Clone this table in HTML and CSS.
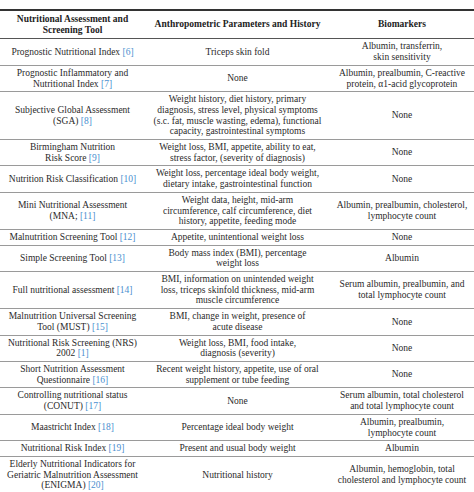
FILE: index.html
```html
<!DOCTYPE html>
<html>
<head>
<meta charset="utf-8">
<link rel="stylesheet" href="styles.css">
</head>
<body>
<div class="page">
<div class="top-space"></div>
<table class="tbl">
<colgroup><col class="c1"><col class="c2"><col class="c3"></colgroup>
<thead>
<tr><th>Nutritional Assessment and<br>Screening Tool</th><th>Anthropometric Parameters and History</th><th>Biomarkers</th></tr>
</thead>
<tbody>
<tr><td>Prognostic Nutritional Index <span class="ref">[6]</span></td><td>Triceps skin fold</td><td>Albumin, transferrin,<br>skin sensitivity</td></tr>
<tr><td>Prognostic Inflammatory and<br>Nutritional Index <span class="ref">[7]</span></td><td>None</td><td>Albumin, prealbumin, C-reactive<br>protein, α1-acid glycoprotein</td></tr>
<tr><td>Subjective Global Assessment<br>(SGA) <span class="ref">[8]</span></td><td>Weight history, diet history, primary<br>diagnosis, stress level, physical symptoms<br>(s.c. fat, muscle wasting, edema), functional<br>capacity, gastrointestinal symptoms</td><td>None</td></tr>
<tr><td>Birmingham Nutrition<br>Risk Score <span class="ref">[9]</span></td><td>Weight loss, BMI, appetite, ability to eat,<br>stress factor, (severity of diagnosis)</td><td>None</td></tr>
<tr><td>Nutrition Risk Classification <span class="ref">[10]</span></td><td>Weight loss, percentage ideal body weight,<br>dietary intake, gastrointestinal function</td><td>None</td></tr>
<tr><td>Mini Nutritional Assessment<br>(MNA; <span class="ref">[11]</span></td><td>Weight data, height, mid-arm<br>circumference, calf circumference, diet<br>history, appetite, feeding mode</td><td>Albumin, prealbumin, cholesterol,<br>lymphocyte count</td></tr>
<tr><td>Malnutrition Screening Tool <span class="ref">[12]</span></td><td>Appetite, unintentional weight loss</td><td>None</td></tr>
<tr><td>Simple Screening Tool <span class="ref">[13]</span></td><td>Body mass index (BMI), percentage<br>weight loss</td><td>Albumin</td></tr>
<tr><td>Full nutritional assessment <span class="ref">[14]</span></td><td>BMI, information on unintended weight<br>loss, triceps skinfold thickness, mid-arm<br>muscle circumference</td><td>Serum albumin, prealbumin, and<br>total lymphocyte count</td></tr>
<tr><td>Malnutrition Universal Screening<br>Tool (MUST) <span class="ref">[15]</span></td><td>BMI, change in weight, presence of<br>acute disease</td><td>None</td></tr>
<tr><td>Nutritional Risk Screening (NRS)<br>2002 <span class="ref">[1]</span></td><td>Weight loss, BMI, food intake,<br>diagnosis (severity)</td><td>None</td></tr>
<tr><td>Short Nutrition Assessment<br>Questionnaire <span class="ref">[16]</span></td><td>Recent weight history, appetite, use of oral<br>supplement or tube feeding</td><td>None</td></tr>
<tr><td>Controlling nutritional status<br>(CONUT) <span class="ref">[17]</span></td><td>None</td><td>Serum albumin, total cholesterol<br>and total lymphocyte count</td></tr>
<tr><td>Maastricht Index <span class="ref">[18]</span></td><td>Percentage ideal body weight</td><td>Albumin, prealbumin,<br>lymphocyte count</td></tr>
<tr><td>Nutritional Risk Index <span class="ref">[19]</span></td><td>Present and usual body weight</td><td>Albumin</td></tr>
<tr class="last"><td>Elderly Nutritional Indicators for<br>Geriatric Malnutrition Assessment<br>(ENIGMA) <span class="ref">[20]</span></td><td>Nutritional history</td><td>Albumin, hemoglobin, total<br>cholesterol and lymphocyte count</td></tr>
</tbody>
</table>
</div>
</body>
</html>
```
FILE: styles.css
```css
html, body {
  margin: 0;
  padding: 0;
  background: #ffffff;
}
.page {
  width: 474px;
  font-family: "Liberation Serif", "DejaVu Serif", serif;
  font-size: 9.5px;
  line-height: 10.7px;
  color: #2a2a2a;
}
.top-space {
  height: 9px;
}
.tbl {
  width: 474px;
  border-collapse: collapse;
  table-layout: fixed;
}
.c1 { width: 145px; }
.c2 { width: 185px; }
.c3 { width: 144px; }
.tbl th {
  font-weight: bold;
  text-align: center;
  vertical-align: middle;
  padding: 3px 2px 3px;
  border-top: 2px solid #333333;
  border-bottom: 1px solid #555555;
  color: #222222;
}
.tbl td {
  text-align: center;
  vertical-align: middle;
  padding: 2px 2px 2px;
  border-bottom: 1px solid #9a9a9a;
  white-space: nowrap;
}
.tbl tr.last td {
  border-bottom: 2px solid #bdbdbd;
}
.ref {
  color: #4a8fcf;
}
```
